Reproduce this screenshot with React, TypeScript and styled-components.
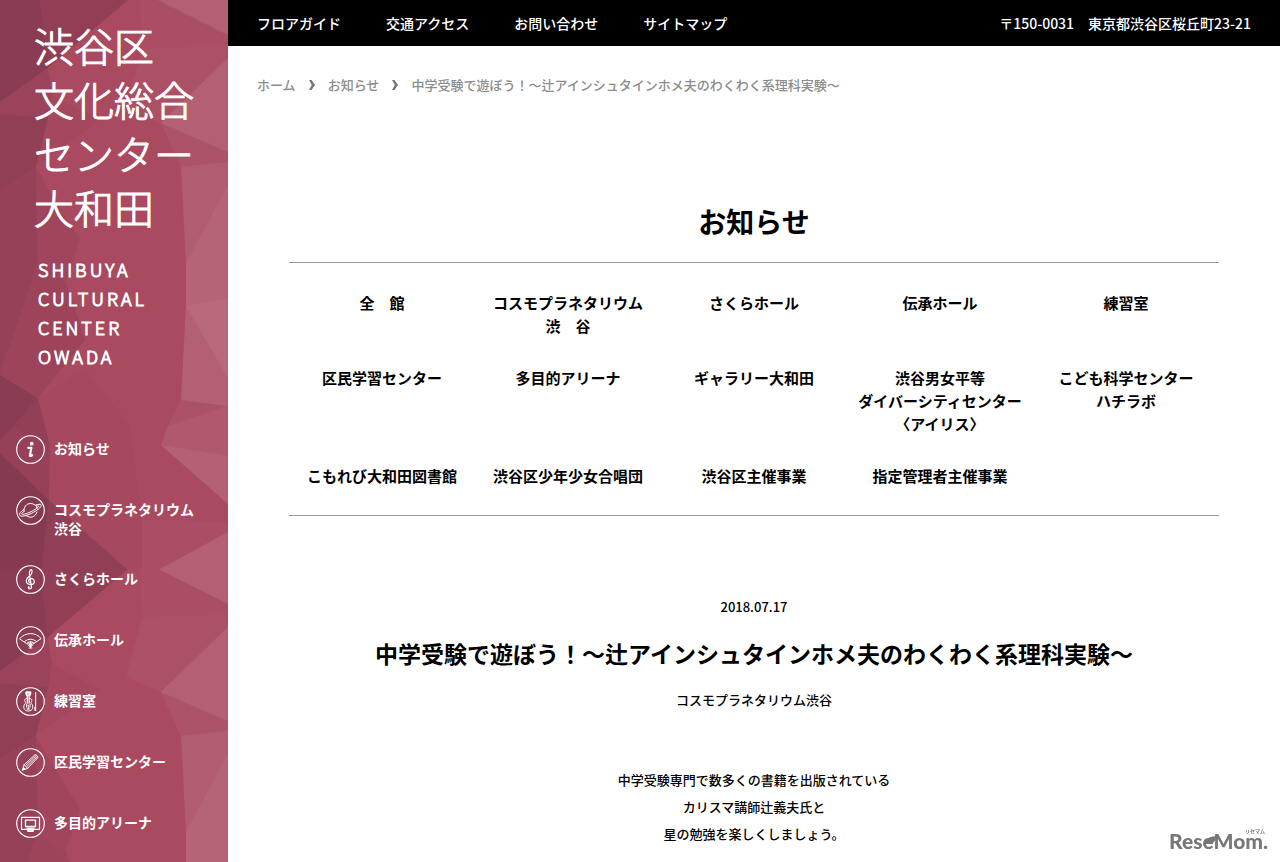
import React from "react";
import styled, { createGlobalStyle } from "styled-components";

const GlobalStyle = createGlobalStyle`
  *, *::before, *::after { box-sizing: border-box; }
  body {
    margin: 0;
    background: #fff;
    color: #000;
    font-family: "Noto Sans CJK JP", sans-serif;
    font-size: 13px;
    font-weight: 500;
  }
  a { color: inherit; text-decoration: none; }
  ul, ol { list-style: none; margin: 0; padding: 0; }
  h1, h2, p { margin: 0; }
`;

const Page = styled.div`
  display: flex;
  min-height: 100vh;
`;

const Sidebar = styled.aside`
  position: relative;
  flex: 0 0 228px;
  padding: 18px 0 20px;
  background: #a94a60;
  color: #fff;
  overflow: hidden;
`;

const Backdrop = styled.svg`
  position: absolute;
  inset: 0;
  width: 100%;
  height: 100%;
`;

const SidebarBody = styled.div`
  position: relative;
`;

const Logo = styled.a`
  display: block;
  padding-left: 34px;
  font-weight: 300;
  stroke-linejoin: round;
  -webkit-text-stroke: 1px #fff;
`;

const LogoName = styled.span`
  display: block;
  font-size: 40px;
  line-height: 54px;
  white-space: nowrap;
`;

const LogoLatin = styled.span`
  display: block;
  padding: 21px 0 0 4px;
  font-size: 18px;
  line-height: 29px;
  letter-spacing: 3px;
`;

const SideNav = styled.nav`
  padding: 64px 16px 0;
`;

const SideList = styled.ul`
  display: grid;
  row-gap: 27px;
`;

const SideLink = styled.a`
  display: flex;
  align-items: flex-start;
  gap: 9px;
  min-height: 34px;
  font-size: 14px;
  line-height: 19px;
  font-weight: 700;
  white-space: nowrap;

  svg { flex: none; }
  span { padding-top: 4px; }
`;

const Column = styled.div`
  flex: 1;
  min-width: 0;
`;

const TopBar = styled.header`
  display: flex;
  align-items: center;
  justify-content: space-between;
  height: 46px;
  padding: 0 29px;
  background: #000;
  color: #fff;
  font-size: 14px;
  white-space: nowrap;
`;

const TopLinks = styled.ul`
  display: flex;
  gap: 45px;
`;

const Breadcrumbs = styled.ol`
  display: flex;
  align-items: center;
  gap: 12px;
  padding: 29px 29px 0;
  color: #8c8c8c;
  line-height: 20px;

  li { display: flex; align-items: center; gap: 12px; }
`;

const Main = styled.main`
  padding: 106px 61px 14px;
  text-align: center;
`;

const PageTitle = styled.h1`
  font-size: 28px;
  line-height: 40px;
  font-weight: 700;
`;

const Categories = styled.ul`
  display: grid;
  grid-template-columns: repeat(5, 1fr);
  row-gap: 29px;
  margin-top: 21px;
  padding: 28px 0;
  border-top: 1px solid #999;
  border-bottom: 1px solid #999;
  font-size: 15px;
  line-height: 23px;
  font-weight: 700;
  white-space: pre-line;
`;

const Article = styled.article`
  padding-top: 81px;
`;

const DateLine = styled.time`
  display: block;
  line-height: 20px;
`;

const ArticleTitle = styled.h2`
  margin-top: 19px;
  font-size: 23px;
  line-height: 34px;
  font-weight: 700;
`;

const Place = styled.p`
  margin-top: 20px;
  line-height: 20px;
`;

const Text = styled.p`
  margin-top: 56px;
  line-height: 27px;
`;

const Watermark = styled.div`
  position: fixed;
  right: 12px;
  bottom: 13px;
  color: #777;
  text-align: right;
`;

const Kana = styled.small`
  display: block;
  padding-right: 3px;
  font-size: 5px;
  line-height: 5px;
  font-weight: 700;
`;

const Wordmark = styled.span`
  position: relative;
  display: block;
  font-family: Lato, "Noto Sans CJK JP", sans-serif;
  font-size: 21px;
  line-height: 16px;
  font-weight: 900;
`;

const Leaf = styled.svg`
  position: absolute;
  left: 35px;
  top: 3px;
`;

const light = "#fff";
const dark = "#4c2038";

const facets: [string, string, number][] = [
  ["0,0 40,0 48,68 0,102", dark, 0.34],
  ["40,0 128,0 48,68", dark, 0.25],
  ["0,102 48,68 52,95 48,118 0,114", dark, 0.17],
  ["0,114 48,118 36,167 0,190", dark, 0.27],
  ["0,190 36,167 38,264 0,375", dark, 0.2],
  ["36,167 52,195 80,240 66,282 38,264", dark, 0.1],
  ["38,264 66,282 85,340 38,398 0,375", dark, 0.13],
  ["0,375 38,398 12,428 0,440", dark, 0.34],
  ["38,398 50,445 12,428", dark, 0.24],
  ["12,428 50,445 49,500 0,453 0,440", dark, 0.2],
  ["0,453 49,500 42,569 0,569", dark, 0.38],
  ["49,500 127,569 42,569", dark, 0.26],
  ["52,95 100,120 36,167", dark, 0.04],
  ["38,398 84,368 130,425 142,520 142,569 127,569 49,500 50,445", dark, 0.03],
  ["158,0 228,0 228,35", light, 0.12],
  ["140,0 158,0 228,35 228,45 142,49", light, 0.02],
  ["142,49 228,45 228,58 161,123 126,108", light, 0.03],
  ["161,123 228,58 228,152", light, 0.12],
  ["161,123 228,152 228,162 181,167", light, 0.05],
  ["181,167 228,162 228,185 186,263", light, 0.1],
  ["228,185 228,298 186,306 186,263", light, 0.14],
  ["186,306 228,298 228,378", light, 0.17],
  ["186,306 228,378 228,406 181,400", light, 0.12],
  ["181,400 228,406 168,426", light, 0.04],
  ["168,426 228,406 228,504 161,445", light, 0.08],
  ["161,445 228,456 228,504", light, 0.05],
  ["142,520 228,522 228,532 160,568 142,569", light, 0.02],
  ["160,569 228,532 228,569", light, 0.12],
];

const Facets = () => (
  <Backdrop aria-hidden="true">
    <defs>
      <pattern id="facets" width="228" height="569" patternUnits="userSpaceOnUse">
        {facets.map(([points, fill, opacity]) => (
          <polygon key={points} points={points} fill={fill} fillOpacity={opacity} />
        ))}
      </pattern>
    </defs>
    <rect width="100%" height="100%" fill="url(#facets)" />
  </Backdrop>
);

const Badge = ({ children }: { children: React.ReactNode }) => (
  <svg width="29" height="29" viewBox="0 0 29 29" fill="none" stroke="#fff" strokeWidth="1" strokeLinecap="round" strokeLinejoin="round" aria-hidden="true">
    <circle cx="14.5" cy="14.5" r="13.8" strokeWidth="1.1" />
    {children}
  </svg>
);

const icons = {
  info: (
    <Badge>
      <circle cx="15.7" cy="8.7" r="1.9" fill="#fff" stroke="none" />
      <path d="M12.2 12.8h3.2l-1.5 7.8q-.1 1 2.3-.4" strokeWidth="2.2" />
    </Badge>
  ),
  planet: (
    <Badge>
      <path d="M8 15.5C7.6 11 10.3 7.6 14.5 7.5c3.5 0 6 2.2 6.6 4.6M10.2 19.6c3.9 3.2 9.2 1.7 10.8-3.6" />
      <path d="M8 13.2c-3.5 2.4-5.3 5-4.2 6.2 1.6 1.8 8 .1 13.5-3 5.8-3.2 9-6.5 7.7-7.7-.7-.7-2.7-.5-5.2.2" />
      <path d="M8 15.500c-1.800 1.200-2.500 2.200-2.100 2.600 1 .9 6-.8 10.200-3 4.500-2.300 7-4.500 6.600-5-.2-.4-1.200-.2-2.300.1" />
    </Badge>
  ),
  clef: (
    <Badge>
      <path d="M12.3 22.4c.2 2.200 3.300 2 3.200-.3L13.400 8.700c-.2-2.300 1-4.200 1.900-4.100 1.200.3 1 3.700-.8 5.500-2.200 2-4.300 3.500-4.200 6 .1 2.200 2 3.500 4.300 3.500 2.200 0 3.700-1.300 3.700-3.100 0-1.700-1.200-2.900-2.800-2.900s-2.900 1-2.900 2.300c0 .9.5 1.500 1.200 1.800" strokeWidth="1.2" />
      <circle cx="12.8" cy="22.3" r="1" fill="#fff" stroke="none" />
    </Badge>
  ),
  fan: (
    <Badge>
      <path d="M3.8 12.6C9.3 5.9 19.7 5.9 25.2 12.6L18 17.3c-2-2-5-2-7 0z" />
      <path d="M8.5 15.6c3.6-3.2 8.4-3.2 12 0M11 17.3l3.5 4.2 3.5-4.2M12.7 16.2l1.8 5.3 1.8-5.3M14.5 15.8v5.7M13 22h3" />
    </Badge>
  ),
  violin: (
    <Badge>
      <path d="M10.3 5h4v3h-4zM9.6 6h5.4M11.4 8v8M13.2 8v8" strokeWidth="1.3" />
      <path d="M11 11.3c-2.4 0-2.7 2.3-1.7 3.6.6.8.2 1.5-.5 2.2-1.9 2-1.4 6.9 3.5 6.9s5.4-4.9 3.5-6.9c-.7-.7-1.1-1.4-.5-2.2 1-1.3.7-3.6-1.7-3.6" />
      <path d="M10.6 17.2v3M14 17.2v3M11 22h2.6M12.3 18v4M19.7 5.5v18M18.8 20.5v3h.9" />
    </Badge>
  ),
  pencil: (
    <Badge>
      <path d="M6.7 21.7l1.4-5L18.9 6.8c.9-.8 3.6 2 2.8 3L11.6 20.3z" />
      <path d="M8.1 16.7l3.5 3.6M10 17l9.9-9.2M11 18.5l9.7-9.5" />
      <path d="M6.7 21.7l.8-2.2 1.4 1.4z" fill="#fff" />
    </Badge>
  ),
  hoop: (
    <Badge>
      <path d="M11 20.3H5.5V8.3h18v12H18" strokeWidth="1.2" />
      <path d="M9.5 17.3v-6.2h10v6.2M9.5 17.5h10" strokeWidth="1.3" />
      <path d="M11 19h7l-1 3.500h-5zM11.5 20.700h6M13 19v3M14.5 19v3.500M16 19v3" strokeWidth="1.2" />
    </Badge>
  ),
};

const sideItems = [
  { icon: icons.info, lines: ["お知らせ"] },
  { icon: icons.planet, lines: ["コスモプラネタリウム", "渋谷"] },
  { icon: icons.clef, lines: ["さくらホール"] },
  { icon: icons.fan, lines: ["伝承ホール"] },
  { icon: icons.violin, lines: ["練習室"] },
  { icon: icons.pencil, lines: ["区民学習センター"] },
  { icon: icons.hoop, lines: ["多目的アリーナ"] },
];

const categories = [
  "全　館",
  "コスモプラネタリウム\n渋　谷",
  "さくらホール",
  "伝承ホール",
  "練習室",
  "区民学習センター",
  "多目的アリーナ",
  "ギャラリー大和田",
  "渋谷男女平等\nダイバーシティセンター\n〈アイリス〉",
  "こども科学センター\nハチラボ",
  "こもれび大和田図書館",
  "渋谷区少年少女合唱団",
  "渋谷区主催事業",
  "指定管理者主催事業",
];

const topLinks = ["フロアガイド", "交通アクセス", "お問い合わせ", "サイトマップ"];

const title = "中学受験で遊ぼう！～辻アインシュタインホメ夫のわくわく系理科実験～";

const Chevron = () => (
  <svg width="8" height="10" viewBox="0 0 8 10" fill="#777" aria-hidden="true">
    <path d="M1 0h2.5L7 5l-3.500 5H1l2.800-5z" />
  </svg>
);

const withBreaks = (lines: string[]) =>
  lines.map((line, i) => (
    <React.Fragment key={line}>
      {i > 0 && <br />}
      {line}
    </React.Fragment>
  ));

export default function App() {
  return (
    <>
      <GlobalStyle />
      <Page>
        <Sidebar>
          <Facets />
          <SidebarBody>
            <Logo href="#">
              <LogoName>{withBreaks(["渋谷区", "文化総合", "センター", "大和田"])}</LogoName>
              <LogoLatin>{withBreaks(["SHIBUYA", "CULTURAL", "CENTER", "OWADA"])}</LogoLatin>
            </Logo>
            <SideNav>
              <SideList>
                {sideItems.map(({ icon, lines }) => (
                  <li key={lines[0]}>
                    <SideLink href="#">
                      {icon}
                      <span>{withBreaks(lines)}</span>
                    </SideLink>
                  </li>
                ))}
              </SideList>
            </SideNav>
          </SidebarBody>
        </Sidebar>
        <Column>
          <TopBar>
            <nav>
              <TopLinks>
                {topLinks.map((label) => (
                  <li key={label}><a href="#">{label}</a></li>
                ))}
              </TopLinks>
            </nav>
            <span>〒150-0031　東京都渋谷区桜丘町23-21</span>
          </TopBar>
          <Breadcrumbs>
            <li><a href="#">ホーム</a><Chevron /></li>
            <li><a href="#">お知らせ</a><Chevron /></li>
            <li>{title}</li>
          </Breadcrumbs>
          <Main>
            <PageTitle>お知らせ</PageTitle>
            <Categories>
              {categories.map((label) => (
                <li key={label}><a href="#">{label}</a></li>
              ))}
            </Categories>
            <Article>
              <DateLine dateTime="2018-07-17">2018.07.17</DateLine>
              <ArticleTitle>{title}</ArticleTitle>
              <Place>コスモプラネタリウム渋谷</Place>
              <Text>
                {withBreaks([
                  "中学受験専門で数多くの書籍を出版されている",
                  "カリスマ講師辻義夫氏と",
                  "星の勉強を楽しくしましょう。",
                ])}
              </Text>
            </Article>
          </Main>
        </Column>
      </Page>
      <Watermark>
        <Kana>リセマム</Kana>
        <Wordmark>
          ReseMom.
          <Leaf width="12" height="9" viewBox="0 0 12 9" aria-hidden="true">
            <path d="M0 8C1 2 5 1 12 0c0 5-3 8-8 8z" fill="#777" />
          </Leaf>
        </Wordmark>
      </Watermark>
    </>
  );
}
